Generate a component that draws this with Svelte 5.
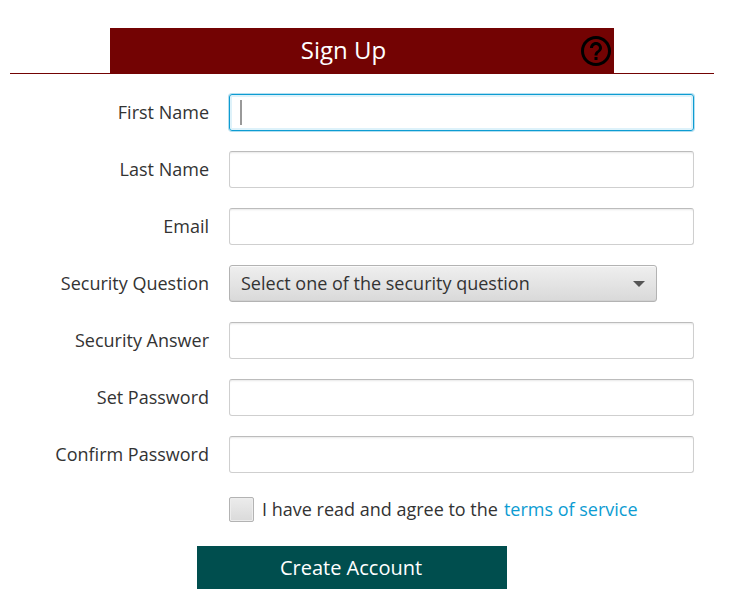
<script>
	const TOP_FIELDS = [
		{ id: 'firstName', label: 'First Name', type: 'text' },
		{ id: 'lastName', label: 'Last Name', type: 'text' },
		{ id: 'email', label: 'Email', type: 'text' },
	];
	const BOTTOM_FIELDS = [
		{ id: 'securityAnswer', label: 'Security Answer', type: 'text' },
		{ id: 'password', label: 'Set Password', type: 'password' },
		{ id: 'confirmPassword', label: 'Confirm Password', type: 'password' },
	];

	let values = $state({});
	let active = $state('firstName');
	let agreed = $state(false);
</script>

{#snippet field(f)}
	<div class="row">
		<label for={f.id}>{f.label}</label>
		<div class="field" class:active={active === f.id}>
			{#if active === f.id && !values[f.id]}<span class="caret"></span>{/if}
			<input
				id={f.id}
				type={f.type}
				bind:value={values[f.id]}
				onfocus={() => (active = f.id)}
			/>
		</div>
	</div>
{/snippet}

<form class="signup" onsubmit={(e) => e.preventDefault()}>
	<header>
		<div class="title">
			<h1>Sign Up</h1>
			<svg class="help" viewBox="2 2 20 20" aria-label="Help">
				<path
					d="M11 18h2v-2h-2v2zm1-16C6.48 2 2 6.48 2 12s4.48 10 10 10 10-4.48 10-10S17.52 2 12 2zm0 18c-4.41 0-8-3.59-8-8s3.59-8 8-8 8 3.59 8 8-3.59 8-8 8zm0-14c-2.21 0-4 1.79-4 4h2c0-1.1.9-2 2-2s2 .9 2 2c0 2-3 1.75-3 5h2c0-2.25 3-2.5 3-5 0-2.21-1.79-4-4-4z"
				/>
			</svg>
		</div>
	</header>

	<div class="fields">
		{#each TOP_FIELDS as f (f.id)}
			{@render field(f)}
		{/each}
		<div class="row">
			<span class="label">Security Question</span>
			<button type="button" class="select">
				<span>Select one of the security question</span>
				<svg class="arrow" viewBox="0 0 12 6"><path d="M0 0h12L6 6z" /></svg>
			</button>
		</div>
		{#each BOTTOM_FIELDS as f (f.id)}
			{@render field(f)}
		{/each}
	</div>

	<div class="agree">
		<input id="agree" type="checkbox" bind:checked={agreed} />
		<label for="agree">I have read and agree to the</label>
		<a href="#terms">terms of service</a>
	</div>

	<button type="submit" class="create">Create Account</button>
</form>

<style>
	:global(body) {
		background: #fff;
		overflow: hidden;
	}

	.signup {
		box-sizing: border-box;
		width: 744px;
		height: 589px;
		padding: 28px 30px 0 10px;
		font: 400 18px/24px 'Open Sans', sans-serif;
		color: #333;
	}

	header {
		height: 45px;
		border-bottom: 1px solid #730303;
	}

	.title {
		display: grid;
		grid-template-columns: 38px 1fr 38px;
		align-items: center;
		width: 504px;
		height: 46px;
		margin-left: 100px;
		background: #730303;

		& > h1 {
			grid-column: 2;
			margin: 0;
			padding-right: 37px;
			font-size: 24px;
			font-weight: 400;
			line-height: 44px;
			padding-bottom: 2px;
			text-align: center;
			color: #fff;
		}
	}

	.help {
		width: 30px;
		height: 30px;
		margin-left: 5px;
	}

	.fields {
		display: flex;
		flex-direction: column;
		gap: 20px;
		padding-top: 20px;
	}

	.row {
		display: grid;
		grid-template-columns: 199px 465px;
		column-gap: 20px;
		align-items: center;
		height: 37px;

		& > label,
		& > .label {
			padding-bottom: 2px;
			text-align: right;
		}
	}

	.field {
		display: flex;
		align-items: center;
		box-sizing: border-box;
		height: 37px;
		padding: 0 10px;
		border: 1px solid #cfcfcf;
		border-top-color: #bcbcbc;
		border-radius: 3px;
		box-shadow: inset 0 2px 2px -1px #e8e8e8;

		&.active {
			border-color: #0d9cd2;
			box-shadow:
				0 0 0 1px #b4dff0,
				inset 0 0 0 2px #def2fa;
		}

		& > input {
			flex: 1;
			min-width: 0;
			padding: 0;
			border: none;
			outline: none;
			background: none;
			font: inherit;
			color: inherit;
		}
	}

	.caret {
		width: 2px;
		height: 25px;
		margin-right: -2px;
		background: #999;
	}

	.select {
		display: flex;
		align-items: center;
		justify-content: space-between;
		box-sizing: border-box;
		width: 428px;
		height: 37px;
		padding: 0 11px;
		border: 1px solid #b3b3b3;
		border-radius: 3px;
		background: linear-gradient(#efefef, #d9d9d9);
		box-shadow:
			inset 0 1px 0 #fafafa,
			inset 0 -1px 0 #d1d1d1;
		font: inherit;
		color: #333;

		& > span {
			padding-bottom: 2px;
		}
	}

	.arrow {
		width: 12px;
		height: 6px;
		fill: #555;
	}

	.agree {
		display: flex;
		align-items: center;
		height: 25px;
		margin: 24px 0 0 219px;

		& > input {
			appearance: none;
			box-sizing: border-box;
			width: 25px;
			height: 25px;
			margin: 0 8px 0 0;
			border: 1px solid #b3b3b3;
			border-radius: 2px;
			background: linear-gradient(#ececec, #dadada);
			box-shadow: inset 0 0 0 1px #ededed;

			&:checked {
				background: #0d9cd2;
			}
		}

		& > label,
		& > a {
			padding-bottom: 2px;
		}

		& > a {
			margin-left: 6px;
			color: #0d9cd2;
			text-decoration: none;
		}
	}

	.create {
		display: block;
		width: 310px;
		height: 43px;
		margin: 24px 0 0 187px;
		padding: 0 2px 0 0;
		border: none;
		background: #004e4e;
		font: 400 20px/43px 'Open Sans', sans-serif;
		color: #fff;
	}
</style>
